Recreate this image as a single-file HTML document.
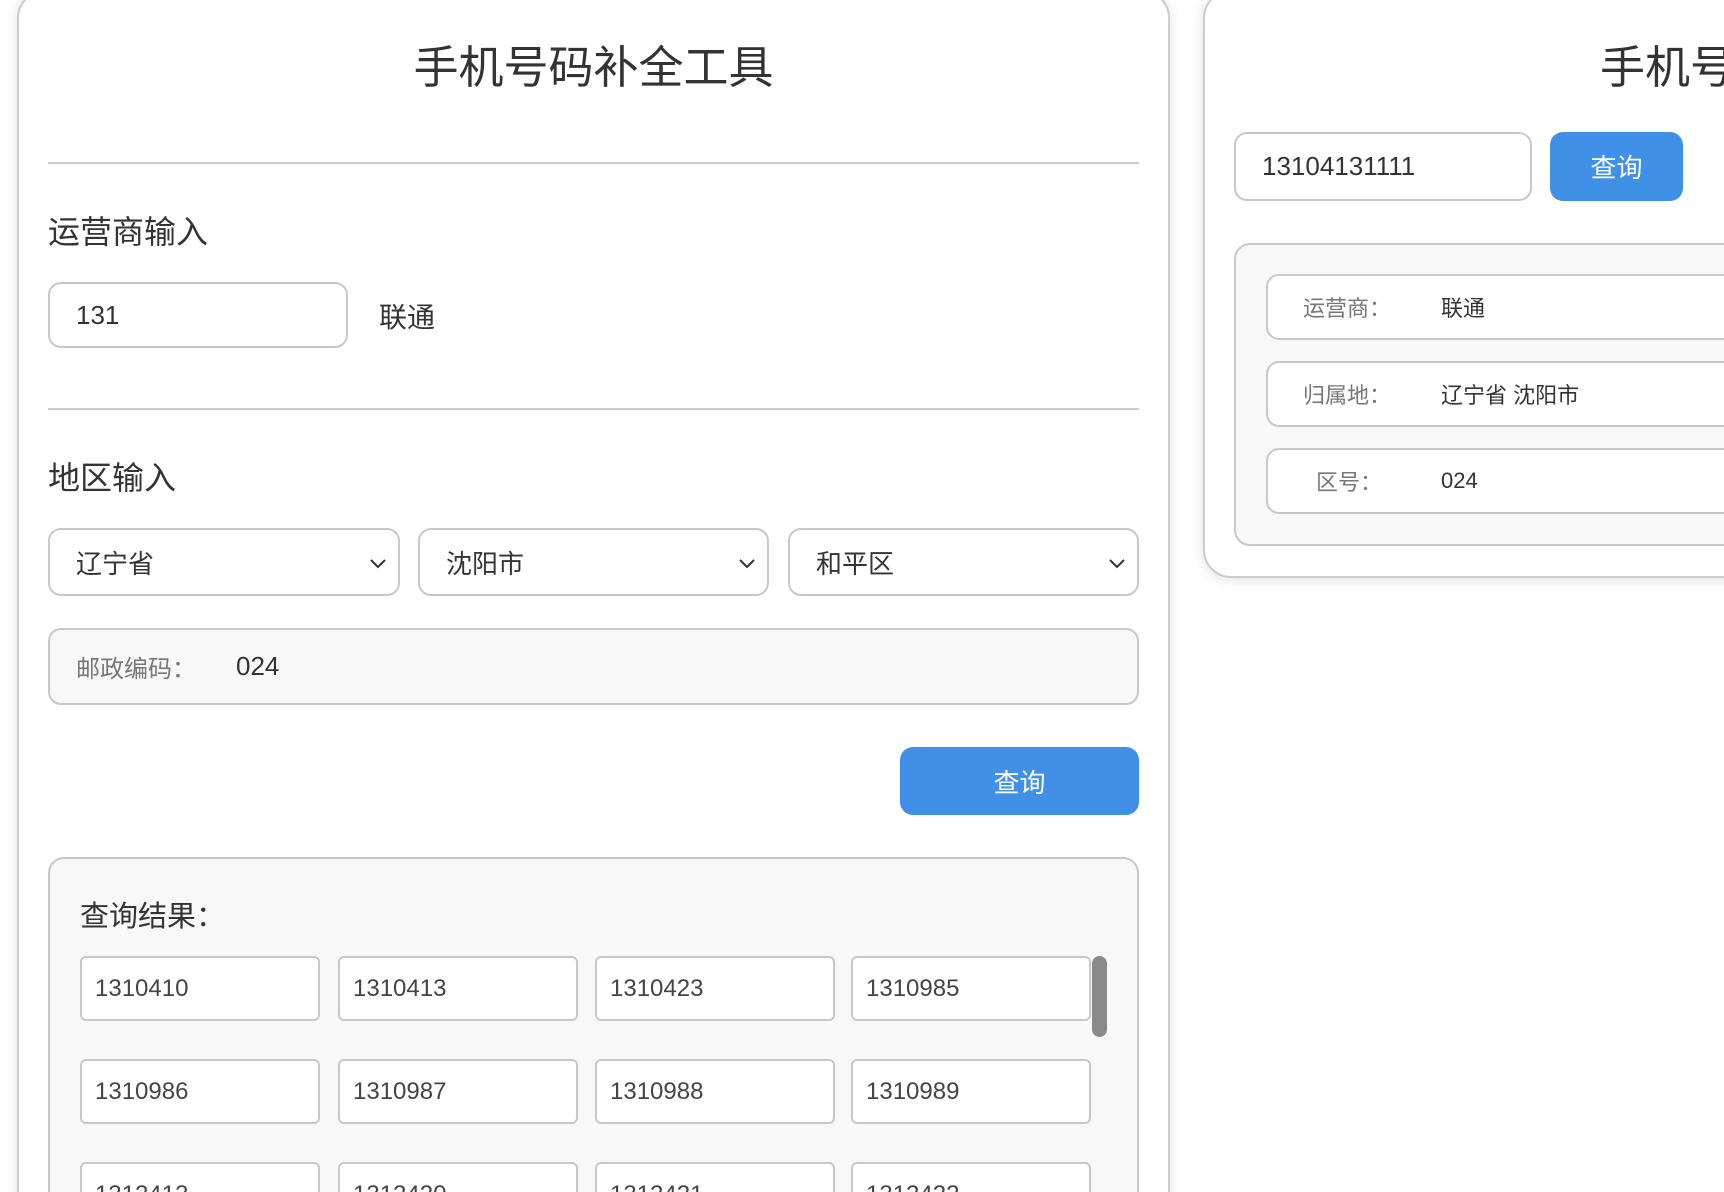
<!DOCTYPE html>
<html style="width:1724px;height:1192px;overflow:hidden"><head><meta charset="utf-8"><style>
*{box-sizing:border-box;margin:0;padding:0}
body{width:1724px;height:1192px;overflow:hidden;background:#fff;font-family:"Liberation Sans","Noto Sans CJK SC",sans-serif;color:#333;position:relative}
.a{position:absolute}
.card{position:absolute;background:#fff;border:2px solid #ccc;border-radius:28px;box-shadow:0 2px 12px rgba(0,0,0,.12)}
.hr{position:absolute;height:2px;background:#ccc}
.box{position:absolute;border:2px solid #c8c8c8;border-radius:13px;background:#fff;display:flex;align-items:center;overflow:hidden}
.gray{background:#f8f8f8}
.btn{position:absolute;background:#4190e8;color:#fff;border-radius:13px;display:flex;align-items:center;justify-content:center;font-size:26px}
.sel svg{position:absolute;right:10px;top:26px}
.cell{position:absolute;width:240px;height:65px;border:2px solid #c8c8c8;border-radius:6px;background:#fff;font-size:24px;padding-left:13px;display:flex;align-items:center;color:#444}
</style></head><body>
<div class="a" style="left:0;top:0;width:1724px;height:1192px;overflow:hidden">
<div class="card" style="left:17px;top:-10px;width:1153px;height:1240px"></div>
<div class="a" style="left:17px;top:31px;width:1153px;text-align:center;font-size:45px;color:#333">手机号码补全工具</div>
<div class="hr" style="left:48px;top:162px;width:1091px"></div>
<div class="a" style="left:48px;top:207px;font-size:32px">运营商输入</div>
<div class="box" style="left:48px;top:282px;width:300px;height:66px;padding-left:26px;font-size:26px">131</div>
<div class="a" style="left:379px;top:296px;font-size:28px">联通</div>
<div class="hr" style="left:48px;top:408px;width:1091px"></div>
<div class="a" style="left:48px;top:453px;font-size:32px">地区输入</div>
<div class="box sel" style="left:48px;top:528px;width:352px;height:68px;padding-left:26px;font-size:26px">辽宁省<svg width="20" height="14"><path d="M3 4l7 7 7-7" stroke="#333" stroke-width="2" fill="none"/></svg></div>
<div class="box sel" style="left:418px;top:528px;width:351px;height:68px;padding-left:26px;font-size:26px">沈阳市<svg width="20" height="14"><path d="M3 4l7 7 7-7" stroke="#333" stroke-width="2" fill="none"/></svg></div>
<div class="box sel" style="left:788px;top:528px;width:351px;height:68px;padding-left:26px;font-size:26px">和平区<svg width="20" height="14"><path d="M3 4l7 7 7-7" stroke="#333" stroke-width="2" fill="none"/></svg></div>
<div class="box gray" style="left:48px;top:628px;width:1091px;height:77px;padding-left:26px;font-size:24px"><span style="color:#777;width:160px">邮政编码：</span><span style="font-size:26px;color:#333">024</span></div>
<div class="btn" style="left:900px;top:747px;width:239px;height:68px">查询</div>
<div class="box gray" style="left:48px;top:857px;width:1091px;height:400px;border-radius:16px"></div>
<div class="a" style="left:80px;top:893px;font-size:29px">查询结果：</div>
<div class="cell" style="left:80px;top:956px">1310410</div>
<div class="cell" style="left:338px;top:956px">1310413</div>
<div class="cell" style="left:595px;top:956px">1310423</div>
<div class="cell" style="left:851px;top:956px">1310985</div>
<div class="cell" style="left:80px;top:1059px">1310986</div>
<div class="cell" style="left:338px;top:1059px">1310987</div>
<div class="cell" style="left:595px;top:1059px">1310988</div>
<div class="cell" style="left:851px;top:1059px">1310989</div>
<div class="cell" style="left:80px;top:1162px">1312413</div>
<div class="cell" style="left:338px;top:1162px">1312420</div>
<div class="cell" style="left:595px;top:1162px">1312421</div>
<div class="cell" style="left:851px;top:1162px">1312422</div>
<div class="a" style="left:1092px;top:956px;width:15px;height:81px;background:#8a8a8a;border-radius:8px"></div>

<div class="card" style="left:1203px;top:-10px;width:1153px;height:588px"></div>
<div class="a" style="left:1600px;top:31px;font-size:45px;white-space:nowrap">手机号码补全工具</div>
<div class="box" style="left:1234px;top:132px;width:298px;height:69px;padding-left:26px;font-size:26px">13104131111</div>
<div class="btn" style="left:1550px;top:132px;width:133px;height:69px">查询</div>
<div class="box gray" style="left:1234px;top:243px;width:600px;height:303px;border-radius:16px"></div>
<div class="box" style="left:1266px;top:274px;width:600px;height:66px;font-size:22px"><span style="color:#777;width:173px;padding-left:35px">运营商：</span>联通</div>
<div class="box" style="left:1266px;top:361px;width:600px;height:66px;font-size:22px"><span style="color:#777;width:173px;padding-left:35px">归属地：</span>辽宁省 沈阳市</div>
<div class="box" style="left:1266px;top:448px;width:600px;height:66px;font-size:22px"><span style="color:#777;width:173px;padding-left:48px">区号：</span>024</div>
</div>
</body></html>
